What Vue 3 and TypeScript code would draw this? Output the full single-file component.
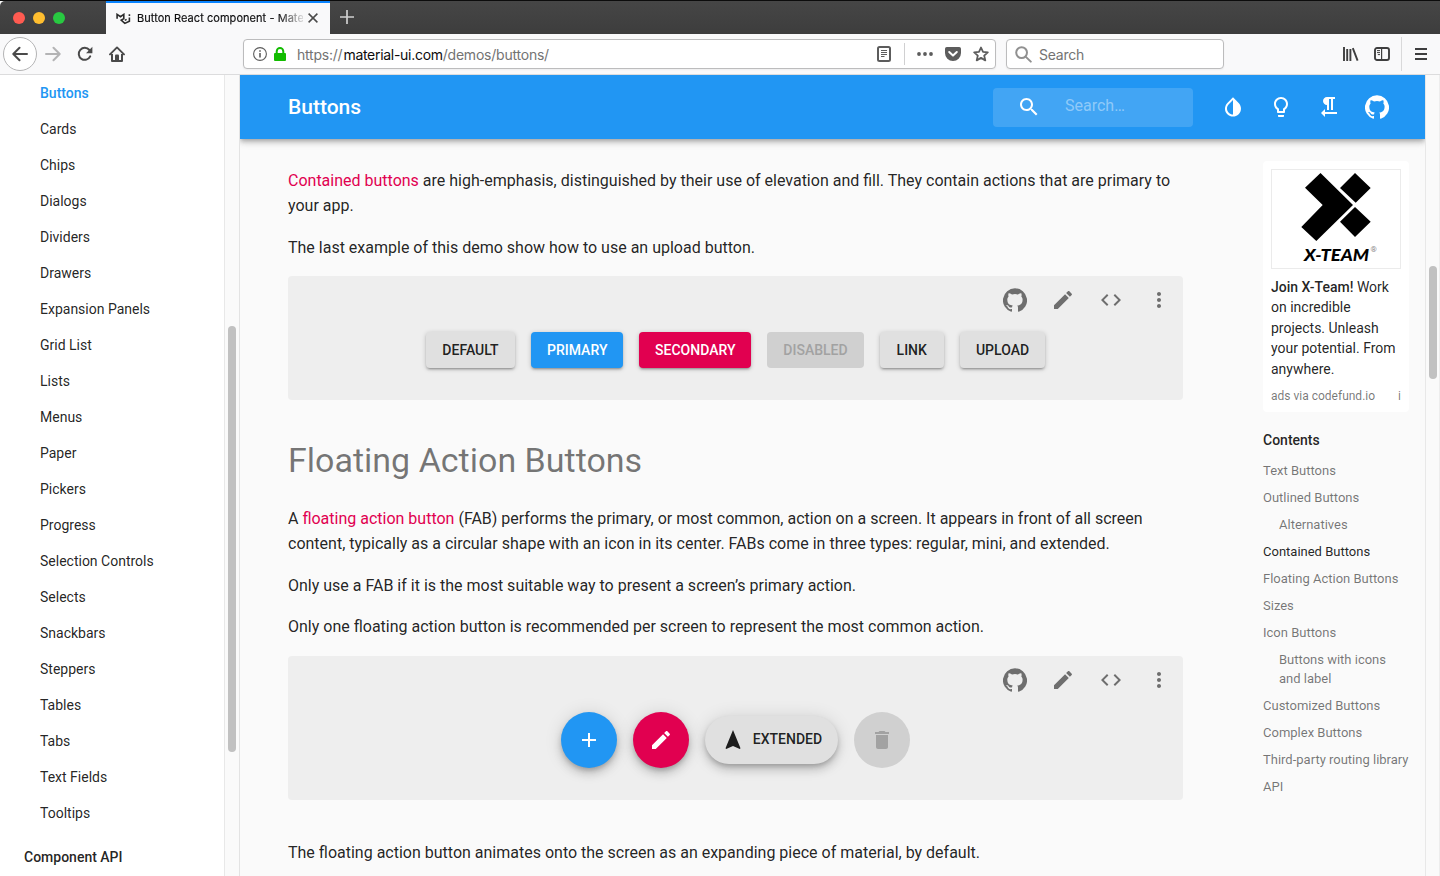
<script setup lang="ts">
const icons: Record<string, string> = {
  search:
    'M15.5 14h-.79l-.28-.27C15.41 12.59 16 11.11 16 9.5 16 5.91 13.09 3 9.5 3S3 5.91 3 9.5 5.91 16 9.5 16c1.61 0 3.09-.59 4.23-1.57l.27.28v.79l5 4.99L20.49 19l-4.99-5zm-6 0C7.01 14 5 11.99 5 9.5S7.01 5 9.5 5 14 7.01 14 9.5 11.99 14 9.5 14z',
  invert:
    'M17.66 7.93L12 2.27 6.34 7.93c-3.12 3.12-3.12 8.19 0 11.31C7.9 20.8 9.95 21.58 12 21.58c2.05 0 4.1-.78 5.66-2.34 3.12-3.12 3.12-8.19 0-11.31zM12 19.59c-1.6 0-3.11-.62-4.24-1.76C6.62 16.69 6 15.19 6 13.59s.62-3.11 1.76-4.24L12 5.1v14.49z',
  bulb: 'M9 21c0 .55.45 1 1 1h4c.55 0 1-.45 1-1v-1H9v1zm3-19C8.14 2 5 5.14 5 9c0 2.38 1.19 4.47 3 5.74V17c0 .55.45 1 1 1h6c.55 0 1-.45 1-1v-2.26c1.81-1.27 3-3.36 3-5.74 0-3.86-3.14-7-7-7zm2.85 11.1l-.85.6V16h-4v-2.3l-.85-.6C7.8 12.16 7 10.63 7 9c0-2.76 2.24-5 5-5s5 2.24 5 5c0 1.63-.8 3.16-2.15 4.1z',
  rtl: 'M10 10v5h2V4h2v11h2V4h2V2h-8C7.79 2 6 3.79 6 6s1.79 4 4 4zm-2 7v-3l-4 4 4 4v-3h12v-2H8z',
  github:
    'M12 .3a12 12 0 0 0-3.8 23.4c.6.1.8-.3.8-.6v-2c-3.3.7-4-1.6-4-1.6-.6-1.4-1.4-1.8-1.4-1.8-1-.7.1-.7.1-.7 1.2 0 1.9 1.2 1.9 1.2 1 1.8 2.8 1.3 3.5 1 0-.8.4-1.3.7-1.6-2.7-.3-5.5-1.3-5.5-6 0-1.2.5-2.3 1.3-3.1-.2-.4-.6-1.6 0-3.2 0 0 1-.3 3.4 1.2a11.5 11.5 0 0 1 6 0c2.3-1.5 3.3-1.2 3.3-1.2.6 1.6.2 2.8 0 3.2.9.8 1.3 1.9 1.3 3.2 0 4.6-2.8 5.6-5.5 5.9.5.4.9 1 .9 2.2v3.3c0 .3.1.7.8.6A12 12 0 0 0 12 .3',
  edit: 'M3 17.25V21h3.75L17.81 9.94l-3.75-3.75L3 17.25zM20.71 7.04c.39-.39.39-1.02 0-1.41l-2.34-2.34c-.39-.39-1.02-.39-1.41 0l-1.83 1.83 3.75 3.75 1.83-1.83z',
  code: 'M9.4 16.6L4.8 12l4.6-4.6L8 6l-6 6 6 6 1.4-1.4zm5.2 0l4.6-4.6-4.6-4.6L16 6l6 6-6 6-1.4-1.4z',
  more: 'M12 8c1.1 0 2-.9 2-2s-.9-2-2-2-2 .9-2 2 .9 2 2 2zm0 2c-1.1 0-2 .9-2 2s.9 2 2 2 2-.9 2-2-.9-2-2-2zm0 6c-1.1 0-2 .9-2 2s.9 2 2 2 2-.9 2-2-.9-2-2-2z',
  add: 'M19 13h-6v6h-2v-6H5v-2h6V5h2v6h6v2z',
  nav: 'M12 2L4.5 20.29l.71.71L12 18l6.79 3 .71-.71z',
  trash: 'M6 19c0 1.1.9 2 2 2h8c1.1 0 2-.9 2-2V7H6v12zM19 4h-3.5l-1-1h-5l-1 1H5v2h14V4z',
}

const headerIcons = ['invert', 'bulb', 'rtl', 'github']
const demoIcons = ['github', 'edit', 'code', 'more']

const navItems = [
  'Buttons', 'Cards', 'Chips', 'Dialogs', 'Dividers', 'Drawers', 'Expansion Panels',
  'Grid List', 'Lists', 'Menus', 'Paper', 'Pickers', 'Progress', 'Selection Controls',
  'Selects', 'Snackbars', 'Steppers', 'Tables', 'Tabs', 'Text Fields', 'Tooltips',
]

interface ContainedButton { label: string; kind: string }
const buttons: ContainedButton[] = [
  { label: 'Default', kind: 'default' },
  { label: 'Primary', kind: 'primary' },
  { label: 'Secondary', kind: 'secondary' },
  { label: 'Disabled', kind: 'disabled' },
  { label: 'Link', kind: 'default' },
  { label: 'Upload', kind: 'default' },
]

interface TocEntry { label: string; nested?: boolean; active?: boolean }
const toc: TocEntry[] = [
  { label: 'Text Buttons' },
  { label: 'Outlined Buttons' },
  { label: 'Alternatives', nested: true },
  { label: 'Contained Buttons', active: true },
  { label: 'Floating Action Buttons' },
  { label: 'Sizes' },
  { label: 'Icon Buttons' },
  { label: 'Buttons with icons and label', nested: true },
  { label: 'Customized Buttons' },
  { label: 'Complex Buttons' },
  { label: 'Third-party routing library' },
  { label: 'API' },
]
</script>

<template>
  <div class="window">
    <header class="tabbar">
      <div class="lights"><i class="red" /><i class="yellow" /><i class="green" /></div>
      <div class="tab">
        <svg class="favicon" width="15" height="12" viewBox="0 0 15 12" fill="none" stroke="#2b2b2b" stroke-width="1.6">
          <path d="M1.1 5.8V1.4l3.4 2.3 3.3-2.3v4.2L5.2 7.2l3.6 3.2 4.6-2.2V4.6M13.4 3V1.2M8.8 7.4l1.8-1" />
        </svg>
        <span class="tab-title">Button React component - Mate</span>
        <svg class="tab-close" width="10" height="10" viewBox="0 0 10 10" stroke="#4a4a4a" stroke-width="1.5"><path d="M.6.6l8.8 8.8M9.4.6L.6 9.4" /></svg>
      </div>
      <svg class="tab-plus" width="14" height="14" viewBox="0 0 14 14" stroke="#d0d0d0" stroke-width="1.7"><path d="M7 0v14M0 7h14" /></svg>
    </header>

    <div class="toolbar">
      <div class="nav-tools">
        <span class="back">
          <svg width="16" height="16" viewBox="0 0 16 16" fill="none" stroke="#4a4a4a" stroke-width="2" stroke-linecap="round" stroke-linejoin="round"><path d="M15 8H1.5M7.5 1.8L1.3 8l6.2 6.2" /></svg>
        </span>
        <span class="slot">
          <svg width="16" height="16" viewBox="0 0 16 16" fill="none" stroke="#b4b4b5" stroke-width="2" stroke-linecap="round" stroke-linejoin="round"><path d="M1 8h13.5M8.5 1.8L14.7 8l-6.2 6.2" /></svg>
        </span>
        <span class="slot">
          <svg width="16" height="16" viewBox="0 0 16 16"><path d="M13.2 10.4A6 6 0 1 1 12.4 4" fill="none" stroke="#4a4a4a" stroke-width="2" stroke-linecap="round" /><path d="M15.4.8v6.4H9z" fill="#4a4a4a" /></svg>
        </span>
        <span class="slot">
          <svg width="16" height="16" viewBox="0 0 16 16"><path d="M1 8.4L8 1.4l7 7" fill="none" stroke="#4a4a4a" stroke-width="1.9" stroke-linecap="round" stroke-linejoin="round" /><path d="M3 8v7h10V8" fill="none" stroke="#4a4a4a" stroke-width="2" stroke-linejoin="round" /><path d="M6 15V9.5a1 1 0 0 1 1-1h2a1 1 0 0 1 1 1V15z" fill="#4a4a4a" /></svg>
        </span>
      </div>
      <div class="urlbar">
        <svg class="info" width="14" height="14" viewBox="0 0 14 14"><circle cx="7" cy="7" r="6.4" fill="none" stroke="#5c5c5c" stroke-width="1.1" /><path d="M6.2 6h1.6v4.6H6.2zM6.2 3.2h1.6v1.6H6.2z" fill="#5c5c5c" /></svg>
        <svg class="lock" width="12" height="14" viewBox="0 0 12 14"><rect y="6" width="12" height="8" rx="1" fill="#12bc00" /><path d="M2.7 7V4.4a3.3 3.3 0 0 1 6.6 0V7" fill="none" stroke="#12bc00" stroke-width="2" /></svg>
        <span class="url">https://<b>material-ui.com</b>/demos/buttons/</span>
        <svg class="reader" width="14" height="16" viewBox="0 0 14 16" fill="none" stroke="#5c5c5c"><rect x="1" y="1" width="12" height="14" rx="1.5" stroke-width="2" /><path d="M4 4.5h6M4 6.5h6M4 8.5h6M4 10.5h3.5" stroke-width="1" /></svg>
        <span class="url-sep" />
        <svg class="dots" width="16" height="4" viewBox="0 0 16 4" fill="#5c5c5c"><circle cx="2" cy="2" r="1.9" /><circle cx="8" cy="2" r="1.9" /><circle cx="14" cy="2" r="1.9" /></svg>
        <svg class="pocket" width="16" height="14" viewBox="0 0 16 14"><path d="M1.8 0h12.4A1.8 1.8 0 0 1 16 1.8V6A8 8 0 0 1 0 6V1.8A1.8 1.8 0 0 1 1.8 0z" fill="#5c5c5c" /><path d="M4.2 5L8 8.6 11.8 5" fill="none" stroke="#fff" stroke-width="2" stroke-linecap="round" stroke-linejoin="round" /></svg>
        <svg class="star" width="16" height="16" viewBox="0 0 16 16"><path d="M8 1.5l2 4.4 4.8.5-3.6 3.2 1.1 4.8L8 11.9l-4.3 2.5 1.1-4.8L1.2 6.4 6 5.9z" fill="none" stroke="#5c5c5c" stroke-width="1.8" stroke-linejoin="round" /></svg>
      </div>
      <div class="searchbar">
        <svg width="17" height="17" viewBox="0 0 17 17" fill="none" stroke="#909090" stroke-width="2" stroke-linecap="round"><circle cx="6.6" cy="6.6" r="5.4" /><path d="M10.6 10.6L15.8 15.6" /></svg>
        <span>Search</span>
      </div>
      <div class="right-tools">
        <svg class="library" width="16" height="14" viewBox="0 0 16 14" stroke="#3e3e3e" stroke-width="1.9"><path d="M1 0v14M4.2 2v12M7.4 2v12M9.8 1.2l4.8 12.4" /></svg>
        <svg class="panel" width="16" height="14" viewBox="0 0 16 14" fill="none" stroke="#3e3e3e"><rect x="1" y="1" width="14" height="12" rx="2" stroke-width="1.9" /><path d="M7.6 1v12" stroke-width="1.2" /><path d="M3 3.6h3M3 5.6h3M3.8 7.6H6" stroke-width="1" /></svg>
        <span class="tool-sep" />
        <svg class="burger" width="12" height="12" viewBox="0 0 12 12" stroke="#3e3e3e" stroke-width="2"><path d="M0 1h12M0 6h12M0 11h12" /></svg>
      </div>
    </div>

    <div class="page">
      <aside class="sidebar">
        <nav>
          <a v-for="(item, i) in navItems" :key="item" :class="{ active: i === 0 }">{{ item }}</a>
          <a class="group">Component API</a>
        </nav>
        <div class="track"><div class="thumb side-thumb" /></div>
      </aside>

      <div class="main">
        <div class="appbar">
          <h1>Buttons</h1>
          <div class="app-search">
            <svg width="24" height="24" viewBox="0 0 24 24"><path :d="icons.search" /></svg>
            <span>Search…</span>
          </div>
          <svg v-for="name in headerIcons" :key="name" class="app-icon" width="24" height="24" viewBox="0 0 24 24"><path :d="icons[name]" /></svg>
        </div>

        <div class="columns">
          <main class="content">
            <p><a>Contained buttons</a> are high-emphasis, distinguished by their use of elevation and fill. They contain actions that are primary to<br>your app.</p>
            <p class="tight">The last example of this demo show how to use an upload button.</p>
            <section class="demo contained">
              <div class="demo-tools">
                <svg v-for="name in demoIcons" :key="name" width="24" height="24" viewBox="0 0 24 24"><path :d="icons[name]" /></svg>
              </div>
              <div class="row">
                <button v-for="b in buttons" :key="b.label" class="btn" :class="[b.kind, b.label.toLowerCase() + '-btn']">{{ b.label }}</button>
              </div>
            </section>
            <h2>Floating Action Buttons</h2>
            <p>A <a>floating action button</a> (FAB) performs the primary, or most common, action on a screen. It appears in front of all screen<br>content, typically as a circular shape with an icon in its center. FABs come in three types: regular, mini, and extended.</p>
            <p class="tight">Only use a FAB if it is the most suitable way to present a screen’s primary action.</p>
            <p>Only one floating action button is recommended per screen to represent the most common action.</p>
            <section class="demo floating">
              <div class="demo-tools">
                <svg v-for="name in demoIcons" :key="name" width="24" height="24" viewBox="0 0 24 24"><path :d="icons[name]" /></svg>
              </div>
              <div class="row">
                <button class="fab primary"><svg width="24" height="24" viewBox="0 0 24 24"><path :d="icons.add" /></svg></button>
                <button class="fab secondary"><svg width="24" height="24" viewBox="0 0 24 24"><path :d="icons.edit" /></svg></button>
                <button class="fab extended"><svg width="24" height="24" viewBox="0 0 24 24"><path :d="icons.nav" /></svg><span>Extended</span></button>
                <button class="fab disabled"><svg width="24" height="24" viewBox="0 0 24 24"><path :d="icons.trash" /></svg></button>
              </div>
            </section>
            <p>The floating action button animates onto the screen as an expanding piece of material, by default.</p>
          </main>

          <aside class="toc">
            <div class="ad">
              <svg class="ad-logo" width="130" height="100" viewBox="0 0 130 100">
                <rect x=".5" y=".5" width="129" height="99" fill="#fff" stroke="#ebebeb" />
                <path d="M49.5 4L82 36 45.3 72 30.3 58 51.7 36 34 18.7z" />
                <path d="M84 4l15.7 15L84.7 33.7 69 19zM84 38l15.7 14.7L84 68 69 52.7z" />
                <text x="33" y="91.6" class="logo-word" textLength="65" lengthAdjust="spacingAndGlyphs">X-TEAM</text>
                <text x="99.5" y="83" class="logo-reg">®</text>
              </svg>
              <div class="ad-text"><b>Join X-Team!</b> Work<br>on incredible<br>projects. Unleash<br>your potential. From<br>anywhere.</div>
              <div class="ad-foot"><span>ads via codefund.io</span><span>i</span></div>
            </div>
            <h3>Contents</h3>
            <ul>
              <li v-for="t in toc" :key="t.label" :class="{ nested: t.nested, active: t.active }">{{ t.label }}</li>
            </ul>
          </aside>
        </div>
      </div>
      <div class="track page-track"><div class="thumb page-thumb" /></div>
    </div>
  </div>
</template>

<style>
body {
  margin: 0;
  overflow: hidden;
  background: #000;
}
</style>

<style scoped>
.window {
  width: 1440px;
  height: 876px;
  display: flex;
  flex-direction: column;
  overflow: hidden;
  box-sizing: border-box;
  border-top: 1px solid #0c0c0c;
  background: #fafafa;
  font-family: Roboto, "Liberation Sans", sans-serif;
  color: rgba(0, 0, 0, 0.87);
}
svg { display: block; flex: none; }

/* Tab strip */
.tabbar {
  flex: none;
  height: 33px;
  display: flex;
  align-items: center;
  background: linear-gradient(#464646, #3d3d3d);
  border-radius: 5px 0 0 0;
}
.lights { width: 106px; display: flex; gap: 8px; padding-left: 13px; box-sizing: border-box; flex: none; }
.lights i { width: 12px; height: 12px; border-radius: 50%; }
.red { background: #ff5b51; }
.yellow { background: #ffbe2f; }
.green { background: #28c941; }
.tab {
  width: 224px;
  height: 33px;
  box-sizing: border-box;
  border-top: 2px solid #0a84ff;
  background: #f9f9fa;
  display: flex;
  align-items: center;
}
.favicon { margin-left: 10px; }
.tab-title {
  margin-left: 6px;
  margin-top: -2px;
  width: 166px;
  white-space: nowrap;
  font: 11px/16px Inter, sans-serif;
  letter-spacing: 0.05px;
  color: #0c0c0d;
  -webkit-text-stroke: 0.15px #0c0c0d;
  mask-image: linear-gradient(90deg, #000 142px, transparent 170px);
}
.tab-close { margin-left: 5px; margin-top: -2px; }
.tab-plus { margin-left: 10px; margin-top: -1px; }

/* Navigation toolbar */
.toolbar {
  flex: none;
  height: 41px;
  box-sizing: border-box;
  border-bottom: 1px solid #dcdcdd;
  display: flex;
  align-items: center;
  background: #f9f9fa;
}
.nav-tools { width: 243px; display: flex; align-items: center; flex: none; }
.back {
  width: 34px;
  height: 34px;
  margin: 0 0 0 3px;
  box-sizing: border-box;
  border: 1px solid #b4b4b5;
  border-radius: 50%;
  background: #fff;
}
.back, .slot { display: flex; align-items: center; justify-content: center; }
.slot { width: 32px; height: 32px; }
.urlbar, .searchbar {
  height: 30px;
  box-sizing: border-box;
  border: 1px solid #bcbcbd;
  border-radius: 4px;
  background: #fff;
  display: flex;
  align-items: center;
  font: 14px/18px Inter, sans-serif;
  letter-spacing: -0.22px;
  box-shadow: 0 1px 2px rgba(0, 0, 0, 0.05);
}
.urlbar { width: 753px; }
.info { margin-left: 9px; }
.lock { margin-left: 7px; margin-bottom: 1px; }
.url { margin-left: 11px; padding-top: 2px; width: 580px; color: #737373; white-space: nowrap; }
.url b { margin-left: 1px; font-weight: 400; letter-spacing: -0.29px; color: #0c0c0d; }
.url-sep { width: 1px; height: 22px; margin-left: 13px; background: #d0d0d1; }
.dots { margin-left: 12px; }
.pocket { margin-left: 12px; }
.star { margin-left: 12px; }
.searchbar { width: 218px; margin-left: 10px; color: #737373; }
.searchbar svg { margin-left: 8px; }
.searchbar span { margin-left: 7px; padding-top: 2px; }
.right-tools { flex: 1; height: 100%; display: flex; align-items: center; }
.library { margin-left: 119px; }
.panel { margin-left: 15px; }
.tool-sep { width: 1px; height: 34px; margin-left: 11px; background: #d9d9da; }
.burger { margin-left: 13px; }

/* Page */
.page { flex: 1; min-height: 0; display: flex; }
.sidebar {
  width: 240px;
  flex: none;
  display: flex;
  box-sizing: border-box;
  border-right: 1px solid #e3e3e3;
  background: #fff;
}
.sidebar nav { flex: 1; display: flex; flex-direction: column; }
.sidebar a {
  flex: none;
  height: 36px;
  line-height: 36px;
  padding-left: 40px;
  font-size: 14px;
}
.sidebar a.active { color: #2196f3; font-weight: 500; }
.sidebar a.group { padding-left: 24px; margin-top: 8px; font-weight: 500; }
.track { width: 15px; flex: none; box-sizing: border-box; border-left: 1px solid #e8e8e8; background: #fafafa; }
.thumb { width: 8px; margin-left: 3px; border-radius: 4px; background: #c1c1c1; }
.side-thumb { margin-top: 251px; height: 426px; }
.page-track { border-right: 1px solid #ededed; }
.page-thumb { margin-top: 191px; height: 113px; }

.main { width: 1185px; flex: none; display: flex; flex-direction: column; min-height: 0; }
.appbar {
  flex: none;
  height: 64px;
  position: relative;
  display: flex;
  align-items: center;
  background: #2196f3;
  color: #fff;
  box-shadow: 0 2px 4px -1px rgba(0, 0, 0, 0.2), 0 4px 5px rgba(0, 0, 0, 0.14), 0 1px 10px rgba(0, 0, 0, 0.12);
  clip-path: inset(0 0 -20px 0);
}
.appbar svg { fill: #fff; }
.appbar h1 { margin: 0 0 0 48px; width: 705px; font-size: 21px; line-height: 24px; font-weight: 500; }
.app-search {
  width: 200px;
  height: 39px;
  margin-right: 4px;
  display: flex;
  align-items: center;
  border-radius: 4px;
  background: rgba(255, 255, 255, 0.15);
  font-size: 16px;
}
.app-search svg { margin-left: 24px; }
.app-search span { margin-left: 24px; margin-bottom: 3px; color: rgba(255, 255, 255, 0.42); }
.app-icon { margin-left: 24px; }

.columns { flex: 1; min-height: 0; display: flex; overflow: hidden; }
.content { width: 895px; margin-left: 48px; padding-top: 29px; flex: none; }
.content p { margin: 0 0 17px; font-size: 16px; line-height: 25px; white-space: nowrap; }
.content p.tight { margin-bottom: 16px; }
.content p a { color: #e10050; }
.content h2 { margin: 40px 0 26px; font-size: 34px; line-height: 40px; font-weight: 400; color: rgba(0, 0, 0, 0.54); }
.demo { border-radius: 4px; background: #eee; box-sizing: border-box; }
.demo.contained { height: 124px; }
.demo.floating { height: 144px; margin-bottom: 40px; }
.demo-tools { height: 48px; display: flex; justify-content: flex-end; align-items: center; gap: 24px; padding-right: 12px; }
.demo-tools svg { fill: #6e6e6e; }
.row { display: flex; justify-content: center; align-items: center; gap: 16px; padding-top: 8px; }
.btn, .fab { border: 0; margin: 0; font: 500 14px/20px Roboto, sans-serif; text-transform: uppercase; }
.btn {
  height: 36px;
  padding: 0;
  border-radius: 4px;
  white-space: nowrap;
  box-shadow: 0 1px 5px rgba(0, 0, 0, 0.2), 0 2px 2px rgba(0, 0, 0, 0.14), 0 3px 1px -2px rgba(0, 0, 0, 0.12);
}
.default-btn { width: 89.5px; }
.primary-btn { width: 92px; }
.secondary-btn { width: 112px; }
.disabled-btn { width: 96.5px; }
.link-btn { width: 64px; }
.upload-btn { width: 85.5px; }
.default, .extended { background: #e0e0e0; color: rgba(0, 0, 0, 0.87); }
.primary { background: #2196f3; color: #fff; fill: #fff; }
.secondary { background: #e10050; color: #fff; fill: #fff; }
.fab {
  width: 56px;
  height: 56px;
  padding: 0;
  border-radius: 28px;
  display: flex;
  align-items: center;
  justify-content: center;
  box-shadow: 0 3px 5px -1px rgba(0, 0, 0, 0.2), 0 6px 10px rgba(0, 0, 0, 0.14), 0 1px 18px rgba(0, 0, 0, 0.12);
}
.extended { width: 133px; height: 48px; border-radius: 24px; gap: 8px; fill: rgba(0, 0, 0, 0.87); }
.extended span { margin-bottom: 2px; }
.disabled { background: #d0d0d0; color: #a2a2a2; fill: #a2a2a2; box-shadow: none; }

/* Right column */
.toc { width: 146px; margin-left: 80px; padding-top: 22px; flex: none; }
.ad { height: 251px; box-sizing: border-box; padding: 8px; border-radius: 4px; background: #fff; }
.logo-word { font: italic 900 17px Lato, sans-serif; }
.logo-reg { font: 8px Roboto, sans-serif; fill: #888; }
.ad-text { margin-top: 7.6px; font-size: 14px; line-height: 20.5px; white-space: nowrap; }
.ad-text b { font-weight: 500; }
.ad-foot { margin-top: 9px; display: flex; justify-content: space-between; font-size: 12px; line-height: 16px; color: rgba(0, 0, 0, 0.54); }
.toc h3 { margin: 18px 0 7px; font-size: 14px; line-height: 20px; font-weight: 500; }
.toc ul { list-style: none; margin: 0; padding: 0; }
.toc li { padding: 4px 0; font-size: 13px; line-height: 19px; color: rgba(0, 0, 0, 0.54); }
.toc li.nested { padding-left: 16px; }
.toc li.active { color: rgba(0, 0, 0, 0.87); }
</style>
